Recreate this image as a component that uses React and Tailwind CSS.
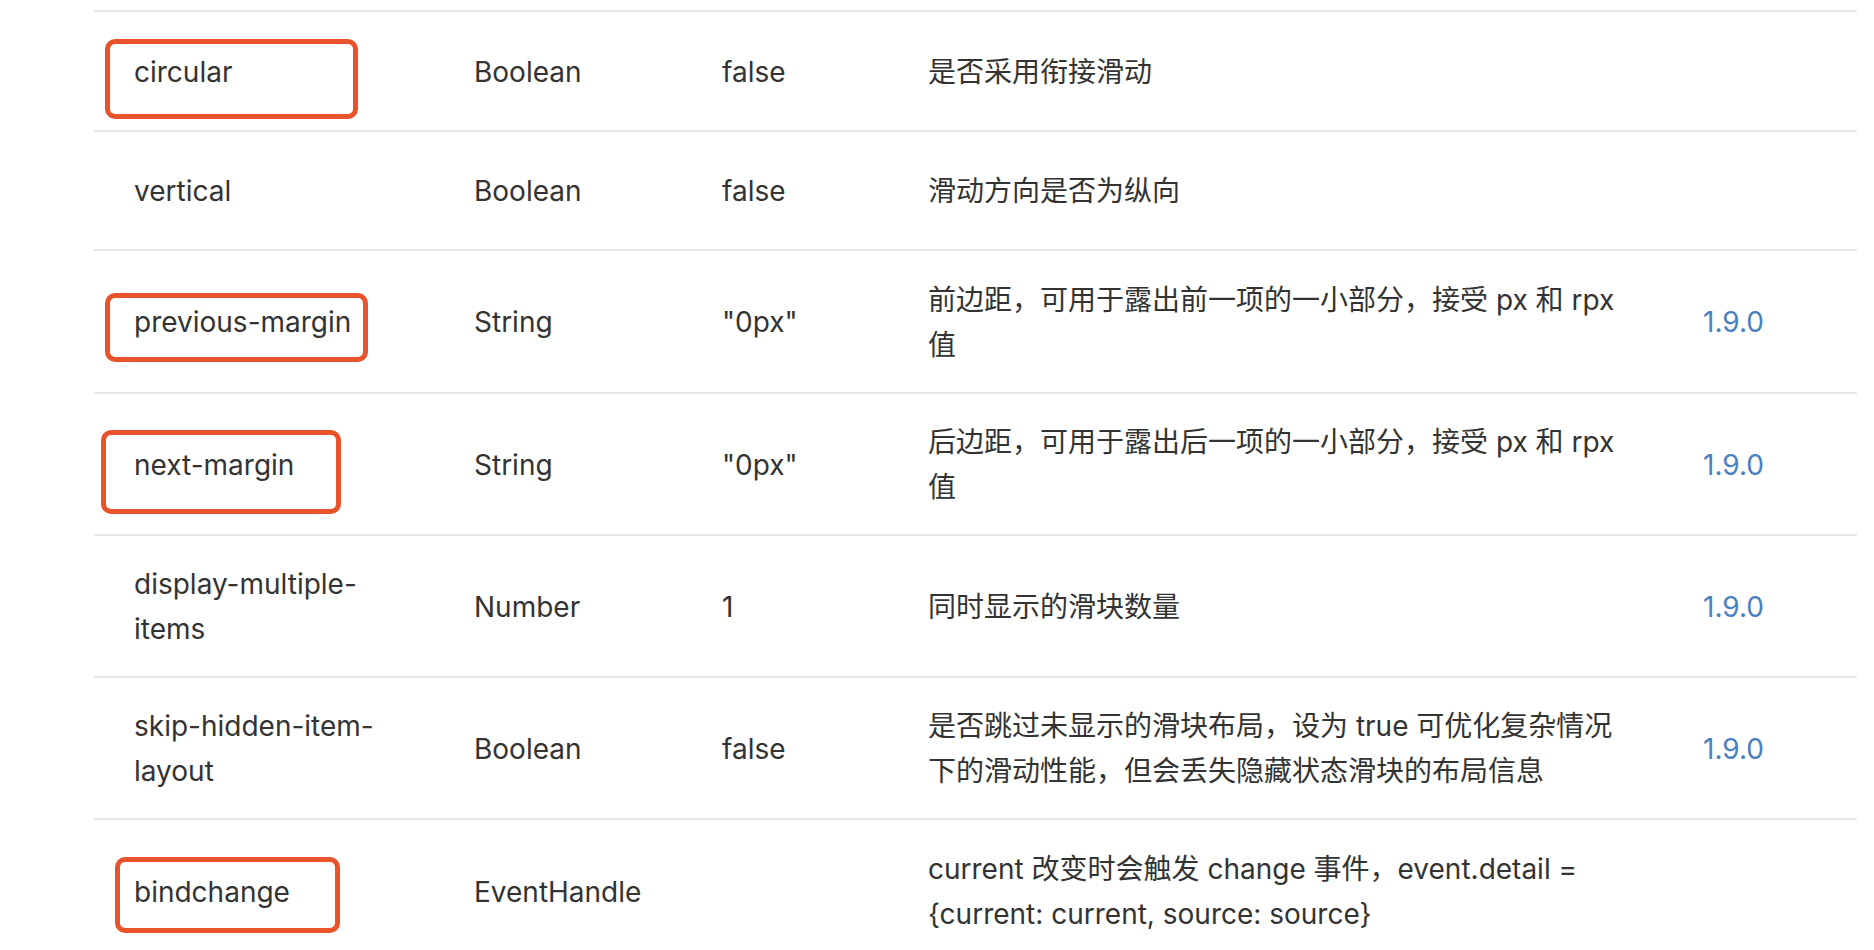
const rows = [
  { name: 'circular', type: 'Boolean', def: 'false', desc: '是否采用衔接滑动', h: 'h-[120px]', box: 'left-[11px] top-[27px] w-[253px] h-[80px]' },
  { name: 'vertical', type: 'Boolean', def: 'false', desc: '滑动方向是否为纵向', h: 'h-[119px]' },
  { name: 'previous-margin', type: 'String', def: '"0px"', desc: '前边距，可用于露出前一项的一小部分，接受 px 和 rpx 值', ver: '1.9.0', h: 'h-[143px]', box: 'left-[11px] top-[42px] w-[263px] h-[69px]' },
  { name: 'next-margin', type: 'String', def: '"0px"', desc: '后边距，可用于露出后一项的一小部分，接受 px 和 rpx 值', ver: '1.9.0', h: 'h-[142px]', box: 'left-[7px] top-[36px] w-[240px] h-[84px]' },
  { name: 'display-multiple-items', type: 'Number', def: '1', desc: '同时显示的滑块数量', ver: '1.9.0', h: 'h-[142px]' },
  { name: 'skip-hidden-item-layout', type: 'Boolean', def: 'false', desc: '是否跳过未显示的滑块布局，设为 true 可优化复杂情况下的滑动性能，但会丢失隐藏状态滑块的布局信息', ver: '1.9.0', h: 'h-[142px]' },
  { name: 'bindchange', type: 'EventHandle', def: '', desc: 'current 改变时会触发 change 事件，event.detail = {current: current, source: source}', h: 'h-[142px]', box: 'left-[21px] top-[37px] w-[225px] h-[76px]', last: true },
]

const Row = ({ row }) => (
  <div className={`relative flex items-center pt-[2px] ${row.h} ${row.last ? '' : 'border-b-2 border-[#e8e8e8]'}`}>
    <div className="w-[380px] pl-[40px] shrink-0">
      <div className="w-[262px] break-words">{row.name}</div>
    </div>
    <div className="w-[248px] shrink-0">{row.type}</div>
    <div className="w-[206px] shrink-0">{row.def}</div>
    <div className="w-[775px] shrink-0">
      <div className="w-[706px]">{row.desc}</div>
    </div>
    <div className="flex-1 text-[#4a80c0]">{row.ver}</div>
    {/* red annotation box drawn over the name cell */}
    {row.box && (
      <div className={`absolute ${row.box} border-[5px] border-[#e9532b] rounded-[10px]`}></div>
    )}
  </div>
)

export default function App() {
  return (
    <div
      className="w-[1874px] h-[950px] overflow-hidden bg-white text-[#333] text-[28px] leading-[45px]"
      style={{ fontFamily: 'Inter, "Noto Sans CJK SC", sans-serif' }}
    >
      <div className="pt-[10px] pl-[94px] w-[1857px]">
        <div className="border-t-2 border-[#e8e8e8]">
          {rows.map((row) => (
            <Row key={row.name} row={row} />
          ))}
        </div>
      </div>
    </div>
  )
}
